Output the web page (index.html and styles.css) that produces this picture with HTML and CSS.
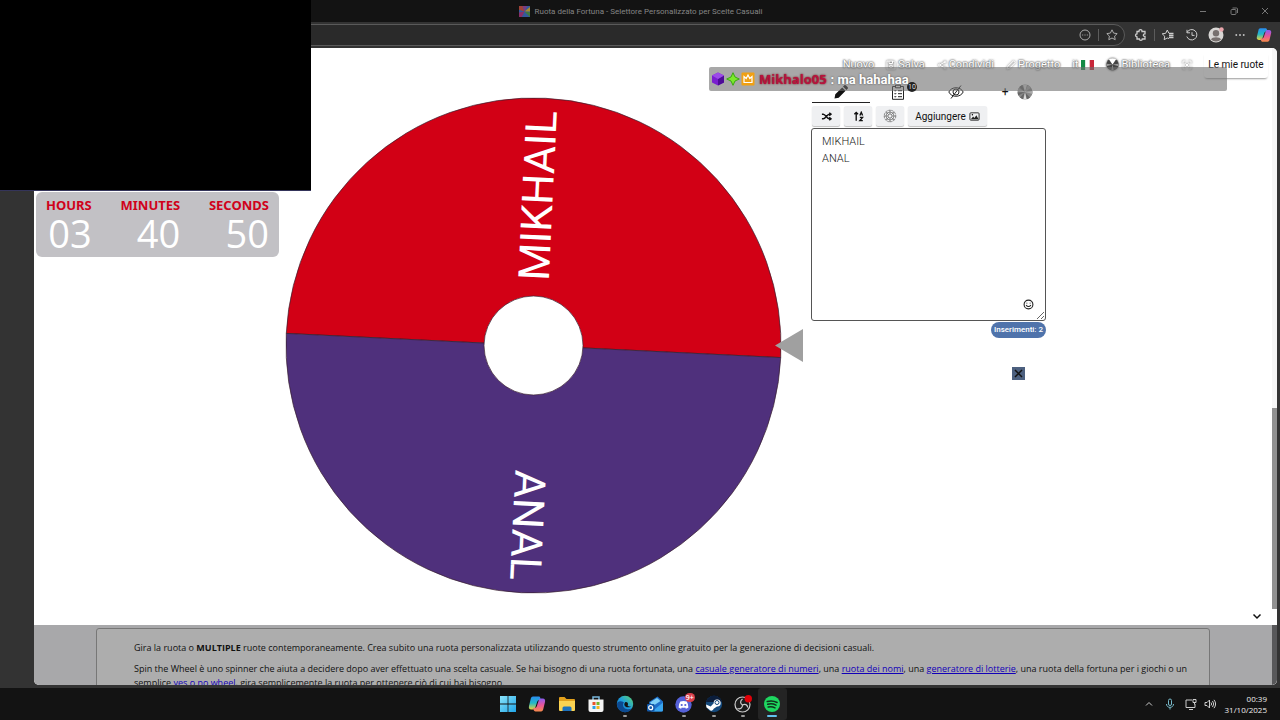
FILE: index.html
```html
<!DOCTYPE html>
<html lang="it">
<head>
    <meta charset="UTF-8">
    <meta name="viewport" content="width=device-width, initial-scale=1.0">
    <title>Ruota della Fortuna - Selettore Personalizzato per Scelte Casuali</title>
    <link rel="stylesheet" href="styles.css">
</head>
<body>
    <svg class="defs" aria-hidden="true">
        <defs>
            <linearGradient id="copilotA" x1="0" y1="0" x2="0" y2="1">
                <stop offset="0" stop-color="#2a8cf0"/><stop offset="0.5" stop-color="#22b8c8"/><stop offset="1" stop-color="#e8d23c"/>
            </linearGradient>
            <linearGradient id="copilotB" x1="0" y1="0" x2="0" y2="1">
                <stop offset="0" stop-color="#8a5cf0"/><stop offset="0.5" stop-color="#e8559a"/><stop offset="1" stop-color="#f78b4a"/>
            </linearGradient>
            <linearGradient id="edgeA" x1="0" y1="1" x2="1" y2="0">
                <stop offset="0" stop-color="#0b59a8"/><stop offset="0.5" stop-color="#1d9de0"/><stop offset="1" stop-color="#5fd86a"/>
            </linearGradient>
            <linearGradient id="winA" x1="0" y1="0" x2="1" y2="1">
                <stop offset="0" stop-color="#8be4fb"/><stop offset="1" stop-color="#1fa5e8"/>
            </linearGradient>
            <symbol id="copilot" viewBox="0 0 18 18">
                <path stroke="none" fill="url(#copilotA)" d="M5 1.500h5.500c1 0 1.500.5 1.800 1.400L13 5h-1.500c-1.300 0-2 .7-2.400 2L7.300 12.500c-.4 1.300-1 2-2.300 2H3.200C1.200 14.500.5 13 1 11l1.700-7C3 2.500 3.600 1.500 5 1.500z"/>
                <path stroke="none" fill="url(#copilotB)" d="M13 16.500H7.500c-1 0-1.500-.5-1.800-1.400L5 13h1.500c1.300 0 2-.7 2.400-2l1.800-5.500c.4-1.300 1-2 2.300-2h1.800c2 0 2.700 1.500 2.200 3.500l-1.700 7c-.3 1.500-.9 2.500-2.300 2.500z"/>
            </symbol>
            <symbol id="pinwheel" viewBox="0 0 16 16">
                <circle cx="8" cy="8" r="7.500" fill="#888"/>
                <path fill="#666" d="M8 8L2.500 3A7.500 7.500 0 0 1 5 1.200zM8 8L.5 8.500 1.200 11.500zM8 8L3 13.600 5.700 15.200zM8 8l2 7.300 3-1.500z"/>
                <path fill="#ddd" d="M8 8L6 .7h4zM8 8l-1.500 7.400h3z"/>
                <path fill="#aaa" d="M8 8l7.500-1v3zM8 8l3-6.900 3 2.700zM8 8L.5 7l1.200-3z"/>
            </symbol>
            <symbol id="pinwheel-dark" viewBox="0 0 16 16">
                <circle cx="8" cy="8" r="7.500" fill="#444"/>
                <path fill="#fff" d="M8 8L3.500 1.500Q8-.8 12.500 1.500z"/>
                <path fill="#999" d="M8 8l7.500-1v3zM8 8l-1.500 7.400h3zM8 8L.5 7v3z"/>
            </symbol>
        </defs>
    </svg>

    <header class="titlebar">
        <div class="page-title">
            <svg class="favicon" viewBox="0 0 12 12"><path fill="#345a9c" d="M0 0h12v12H0z"/><path fill="#a04236" d="M6 6L0 4V0h4z"/><path fill="#7a3c80" d="M6 6L4 0h5z"/><path fill="#a88a30" d="M6 6l6-5v5z"/><path fill="#417a3c" d="M6 6l6 1v5z"/><path fill="#8a2f68" d="M6 6L0 7v5h3z"/></svg>
            <span>Ruota della Fortuna - Selettore Personalizzato per Scelte Casuali</span>
        </div>
        <div class="window-controls">
            <button aria-label="Riduci"><svg viewBox="0 0 12 12"><path d="M3 6.500h6"/></svg></button>
            <button aria-label="Ripristina"><svg viewBox="0 0 12 12"><rect x="3" y="4.500" width="5" height="5" rx="1"/><path d="M4.500 3h4q1 0 1 1v4"/></svg></button>
            <button aria-label="Chiudi"><svg viewBox="0 0 12 12"><path d="M3 3l6 6M9 3L3 9"/></svg></button>
        </div>
    </header>

    <div class="toolbar">
        <div class="address">
            <button aria-label="Altre opzioni"><svg viewBox="0 0 16 16"><circle cx="8" cy="8" r="5"/><path d="M5.200 8h1M7.500 8h1M9.800 8h1"/></svg></button>
            <span class="sep"></span>
            <button aria-label="Preferiti"><svg viewBox="0 0 16 16"><path d="M8 2.800l1.600 3.300 3.600.5-2.600 2.500.6 3.600L8 11l-3.200 1.700.6-3.600-2.600-2.500 3.600-.5z"/></svg></button>
        </div>
        <div class="tools">
            <button aria-label="Estensioni"><svg viewBox="0 0 16 16"><path stroke-width="1.300" d="M4 4.500h2c-.3-2.600 3.300-2.600 3 0h3v2.300c-2.200-.1-2.200 2.800 0 2.700V12H9.300c0 1.800-2.900 1.800-2.900 0H4V9.800c-2-.1-2-2.900 0-2.900z"/></svg></button>
            <span class="sep"></span>
            <button aria-label="Raccolte"><svg viewBox="0 0 16 16"><path d="M9 11.500l-1.800-.5-3 1.700.5-3.500L2.200 6.800l3.500-.5L7.300 3l1.500 3.200"/><path stroke-width="1.500" d="M9 6.500h4.500M9 8.500h4.500M9 10.500h4.500"/></svg></button>
            <button aria-label="Cronologia"><svg viewBox="0 0 16 16"><path d="M3 5.500a5.200 5.200 0 1 1-.2 4M3 2.800v3h3M8 5.200v3.200h2.500"/></svg></button>
            <button aria-label="Profilo"><svg class="avatar" viewBox="0 0 16 16"><circle cx="8" cy="8" r="7.500" fill="#d8d6d4"/><circle cx="8" cy="6.200" r="3.200" fill="#77706e"/><path fill="#77706e" d="M3 12.500c1-3 9-3 10 0-2.500 2.500-7.500 2.500-10 0z"/><circle cx="13.500" cy="2.500" r="2.200" fill="#eaa6ac"/></svg></button>
            <button aria-label="Menu"><svg viewBox="0 0 16 16"><path stroke-width="1.600" stroke="#ddd" d="M3.500 8h1.600M7.200 8h1.600M10.900 8h1.600"/></svg></button>
            <button aria-label="Copilot"><svg><use href="#copilot"/></svg></button>
        </div>
    </div>

    <div class="browser">
        <div class="page">
            <div class="content">
                <main class="main">
                    <section class="wheel-col">
                        <svg class="wheel" viewBox="-1 0 519 497" role="img" aria-label="Ruota">
                            <g transform="rotate(2.800 247.500 248.500)">
                                <path class="slice-top" d="M0 248.500a247.500 247.500 0 0 1 495 0z"/>
                                <path class="slice-bottom" d="M495 248.500a247.500 247.500 0 0 1-495 0z"/>
                            </g>
                            <circle class="hub" cx="247.500" cy="248.500" r="49.500"/>
                            <g class="wheel-text">
                                <text transform="translate(247.500 248.500) rotate(-87.200)" x="235" y="12">MIKHAIL</text>
                                <text transform="translate(247.500 248.500) rotate(92.800)" x="235" y="12">ANAL</text>
                            </g>
                            <path class="pointer" d="M489 248.500l28-16.500v33z"/>
                        </svg>
                    </section>

                    <section class="side">
                        <nav class="menu">
                            <a href="#">Nuovo</a>
                            <a href="#"><svg viewBox="0 0 10 10"><path d="M1 1h6.500L9 2.500V9H1zM3 1v2.500h3.500V1"/><circle cx="5" cy="6.300" r="1.300"/></svg>Salva</a>
                            <a href="#"><svg viewBox="0 0 10 10"><path d="M8 2L2.500 5 8 8"/><circle cx="8" cy="2" r="1"/><circle cx="2.500" cy="5" r="1"/><circle cx="8" cy="8" r="1"/></svg>Condividi</a>
                            <a href="#"><svg viewBox="0 0 10 10"><path d="M1 9l.7-2.500L7.500.8l1.700 1.700-5.700 5.800z"/></svg>Progetto</a>
                            <a href="#">it<svg class="flag" viewBox="0 0 13 10"><path fill="#138a45" d="M0 0h4.400v10H0z"/><path fill="#fff" d="M4.400 0h4.300v10H4.400z"/><path fill="#c9273a" d="M8.700 0H13v10H8.700z"/></svg></a>
                            <a href="#"><svg class="pin"><use href="#pinwheel-dark"/></svg>Biblioteca</a>
                            <a href="#" aria-label="Schermo intero"><svg viewBox="0 0 10 10"><path d="M1 3.500V1h2.500M6.500 1H9v2.500M9 6.500V9H6.500M3.500 9H1V6.500M3.500 3.500l3 3M6.500 3.500l-3 3"/></svg></a>
                            <button class="my-wheels">Le mie ruote</button>
                        </nav>

                        <div class="panel">
                            <div class="tabs">
                                <button class="tab active" aria-label="Modifica"><svg viewBox="0 0 16 16"><path fill="#111" d="M1.500 14.500l.8-4.200 6.900-6.900 3.400 3.400-6.900 6.900zM10 2.600l1.200-1.200c.6-.6 1.300-.5 1.900.1l1.400 1.400c.6.6.6 1.300.1 1.900L13.400 6z"/></svg></button>
                                <button class="tab" aria-label="Risultati"><svg viewBox="0 0 16 16"><path class="line" d="M5.500 2.500H2.500v12.800h11V2.500h-3M5.500 1.200h5v2.600h-5zM4.500 6.500l.7.700 1-1.200M4.500 9.500l.7.700 1-1.200M4.500 12.500l.7.700 1-1.200M8 6.700h4M8 9.700h4M8 12.700h4"/></svg><span class="count">10</span></button>
                                <button class="tab" aria-label="Nascondi"><svg viewBox="0 0 16 16"><path class="line" d="M.8 8C3.500 2.300 12.500 2.300 15.200 8 12.500 13.700 3.500 13.700.8 8zM13 1.500l-10 13"/><circle class="line" cx="8" cy="8" r="3"/></svg></button>
                                <button class="tab add" aria-label="Aggiungi ruota"><span>+</span><svg><use href="#pinwheel"/></svg></button>
                            </div>

                            <div class="actions">
                                <button aria-label="Mescola"><svg viewBox="0 0 12 12"><path class="bold" d="M1 3.500h1.500c2.500 0 4 5 6.500 5h1.500M1 8.500h1.500c2.500 0 4-5 6.500-5h1.500M9 1.800l2 1.700-2 1.700M9 6.800l2 1.700-2 1.700"/></svg></button>
                                <button aria-label="Ordina"><svg viewBox="0 0 12 12"><path class="bold" d="M3.500 10.500v-9M1.500 3.500l2-2 2 2M7.500 5l1.500-3.500L10.500 5M7.500 7h3l-3 3.500h3.200"/></svg></button>
                                <button aria-label="Colori"><svg class="flower" viewBox="0 0 14 14"><circle cx="7" cy="7" r="2"/><circle cx="7" cy="7" r="4"/><circle cx="7" cy="7" r="5.800" stroke-dasharray="2.500 .6"/><path d="M7 1v4M7 9v4M1 7h4M9 7h4M2.800 2.800l2.800 2.800M8.400 8.400l2.800 2.800M11.200 2.800L8.400 5.600M5.600 8.400l-2.800 2.800"/></svg></button>
                                <button class="wide">Aggiungere <svg viewBox="0 0 12 12"><rect class="line" x="1" y="2" width="10" height="8" rx="1"/><path fill="#222" d="M2 9l2.500-3 1.500 1.500L8 4.500 10.500 9z"/><circle cx="3.700" cy="4.200" r=".8"/></svg></button>
                            </div>

                            <div class="entries">
                                <textarea aria-label="Elenco voci" spellcheck="false">MIKHAIL
ANAL</textarea>
                                <button class="emoji" aria-label="Emoji"><svg viewBox="0 0 10 10"><circle class="line" cx="5" cy="5" r="4"/><path class="line" d="M2.800 5.500q2.200 2.600 4.400 0M3.500 3.300v.8M6.500 3.300v.8"/></svg></button>
                            </div>
                            <div class="total"><span>Inserimenti: 2</span></div>
                            <div class="ad"><button aria-label="Chiudi annuncio"><svg viewBox="0 0 13 13"><path d="M3 3l7 7M10 3l-7 7"/></svg></button></div>
                        </div>
                        <button class="down" aria-label="Scorri"><svg viewBox="0 0 10 10"><path d="M1.500 3.500L5 7l3.500-3.500"/></svg></button>
                    </section>
                </main>

                <section class="info">
                    <div class="info-box">
                        <p>Gira la ruota o <b>MULTIPLE</b> ruote contemporaneamente. Crea subito una ruota personalizzata utilizzando questo strumento online gratuito per la generazione di decisioni casuali.</p>
                        <p>Spin the Wheel è uno spinner che aiuta a decidere dopo aver effettuato una scelta casuale. Se hai bisogno di una ruota fortunata, una <a href="#">casuale generatore di numeri</a>, una <a href="#">ruota dei nomi</a>, una <a href="#">generatore di lotterie</a>, una ruota della fortuna per i giochi o un semplice <a href="#">yes o no wheel</a>, gira semplicemente la ruota per ottenere ciò di cui hai bisogno.</p>
                    </div>
                </section>
            </div>
            <div class="scrollbar"><div class="thumb"></div><div class="corner"></div><div class="rest"></div></div>
        </div>
    </div>

    <footer class="taskbar">
        <div class="apps">
            <button aria-label="Start"><svg viewBox="0 0 18 18"><path fill="url(#winA)" d="M1 1h7.600v7.600H1zM9.400 1H17v7.600H9.400zM1 9.400h7.600V17H1zM9.400 9.400H17V17H9.400z"/></svg></button>
            <button aria-label="Copilot"><svg><use href="#copilot"/></svg></button>
            <button aria-label="Esplora file"><svg viewBox="0 0 18 18"><path fill="#e3a11c" d="M1 3q0-1 1-1h4.500l2 2H16q1 0 1 1v4H1z"/><path fill="#fbd352" d="M1 6h16v9q0 1-1 1H2q-1 0-1-1z"/><path fill="#1d72bd" d="M4.500 16v-3q0-1.500 1.500-1.500h6q1.500 0 1.500 1.500v3z"/></svg></button>
            <button aria-label="Store"><svg viewBox="0 0 18 18"><path fill="none" stroke="#78b7dc" stroke-width="1.500" d="M6 5V2h6v3"/><path fill="#f4f4f4" d="M1.500 4.500h15V15q0 2-2 2h-11q-2 0-2-2z"/><path fill="#e9532c" d="M5.500 7h3v3h-3z"/><path fill="#74b52c" d="M9.500 7h3v3h-3z"/><path fill="#2b9fe6" d="M5.500 11h3v3h-3z"/><path fill="#f1b71e" d="M9.500 11h3v3h-3z"/></svg></button>
            <button class="running" aria-label="Edge"><svg viewBox="0 0 18 18"><circle cx="9" cy="9" r="8.200" fill="url(#edgeA)"/><path fill="#0c4a91" d="M1 9c0 5 4 8.200 8 8.200 3 0 5.500-1.500 6.700-3.700-3.500 1.800-8.700.5-8.700-3.500 0-1 .4-2 1-2.500C5 5.500 1.500 6 1 9z"/><path fill="#131313" d="M9 7.500c-1.500 1.500-.5 4.800 3 4.800 2 0 3.500-.3 4.700-1.300-1 1-3.700.8-4.700 0-.7-.6 0-1 0-2 0-1.500-1.800-2.500-3-1.500z"/></svg></button>
            <button aria-label="Outlook"><svg viewBox="0 0 18 18"><path fill="#1d6fc9" d="M3 7l8.500-5.500L17 6.500V15q0 1.500-1.500 1.500H5z"/><path fill="#7fd0f7" d="M4 7.500L11 3l3.500 3L7 11z"/><path fill="#38a5ee" d="M17 7.500L6 16.500h9.500Q17 16.500 17 15z"/><rect x="1" y="9" width="7.500" height="7.500" rx="1" fill="#1258a8"/><circle cx="4.700" cy="12.700" r="2" fill="none" stroke="#fff" stroke-width="1.200"/></svg></button>
            <button class="running" aria-label="Discord"><svg viewBox="0 0 18 18"><circle cx="8.500" cy="9.500" r="8.200" fill="#5561d8"/><path fill="#fff" d="M5.300 6.500q3.200-1.200 6.400 0 1.800 2.700 1.700 6-1.200 1-2.500 1.200l-.7-1.200q-1.700.5-3.400 0l-.7 1.200q-1.300-.2-2.500-1.200-.1-3.300 1.700-6z"/><circle cx="6.700" cy="10" r="1.100" fill="#5561d8"/><circle cx="10.300" cy="10" r="1.100" fill="#5561d8"/></svg><span class="alert">9+</span></button>
            <button class="running" aria-label="Steam"><svg viewBox="0 0 18 18"><circle cx="9" cy="9" r="8.200" fill="#14497c"/><path fill="#0b1d3b" d="M1 7a8.200 8.200 0 0 1 16 0z"/><path fill="#fff" d="M1 9.500l4.700 2 3-3.200a3.500 3.500 0 1 1 3.300 3.200l-3.300 2.300a2.500 2.500 0 0 1-4.700.4L1.500 12.500z"/><circle cx="12" cy="7.500" r="2" fill="#fff" stroke="#14497c" stroke-width="1"/></svg></button>
            <button class="running" aria-label="OBS"><svg viewBox="0 0 18 18"><circle cx="8.500" cy="9.500" r="7.500" fill="#1c1c1c" stroke="#ccc" stroke-width="1.200"/><path fill="none" stroke="#ccc" stroke-width="1.200" d="M8.500 10c-2.500-1.500-2.500-4 0-6M8.500 10c2.500-1.500 5-.3 5.200 2.500M8.500 10c0 3-2.300 4.500-5 3.500"/><circle cx="14.300" cy="3.700" r="3.700" fill="#e00008"/></svg></button>
            <button class="running current" aria-label="Spotify"><svg viewBox="0 0 18 18"><circle cx="9" cy="9" r="8" fill="#1ed760"/><path fill="none" stroke="#10301b" stroke-width="1.500" stroke-linecap="round" d="M4.200 6.500q5.300-1.500 9.900 1M4.700 9.300q4.500-1.200 8.300.9M5.200 12q3.700-1 6.800.8"/></svg></button>
        </div>
        <div class="tray">
            <svg viewBox="0 0 12 12"><path d="M3 7.500l3-3 3 3"/></svg>
            <svg class="mic" viewBox="0 0 12 12"><rect x="4.500" y="1" width="3" height="6.500" rx="1.500"/><path d="M2.500 6c0 4.500 7 4.500 7 0M6 9.500v2"/></svg>
            <svg viewBox="0 0 12 12"><path d="M7 2H1v7.500h9V6M4 11.500h4M8 1.500h3v3H8zM9.500 4.500v2"/></svg>
            <svg viewBox="0 0 12 12"><path d="M1 4.500h2L5.500 2v8L3 7.500H1zM7 4.500q1.300 1.500 0 3M8.500 3q2.500 3 0 6M10 1.800q3.200 4.200 0 8.400"/></svg>
            <div class="clock"><span>00:39</span><span>31/10/2025</span></div>
        </div>
    </footer>

    <!-- stream overlays -->
    <div class="cam"></div>

    <div class="timer">
        <div class="unit"><span class="unit-name">HOURS</span><span class="unit-value">03</span></div>
        <div class="unit"><span class="unit-name">MINUTES</span><span class="unit-value">40</span></div>
        <div class="unit"><span class="unit-name">SECONDS</span><span class="unit-value">50</span></div>
    </div>

    <div class="chat">
        <svg viewBox="0 0 14 14"><path fill="#7a1fd0" d="M7 .5l6 3v7l-6 3-6-3v-7z"/><path fill="#4d0d97" d="M7 7l6-3.500v7l-6 3z"/><path fill="#9c4be8" d="M1 3.500l6-3 6 3L7 7z"/></svg>
        <svg viewBox="0 0 14 14"><path fill="#7be82c" stroke="#3aa80f" d="M7 .7l2 4.300 4.300 2L9 9l-2 4.300L5 9 .7 7 5 5z"/></svg>
        <svg viewBox="0 0 14 14"><rect x=".5" y=".5" width="13" height="13" rx="1" fill="#f0a013"/><path fill="none" stroke="#fff" stroke-width="1.200" d="M3 10.500V4.500l2.200 2L7 3l1.800 3.500 2.200-2v6z"/></svg>
        <span class="chat-user">Mikhalo05</span>
        <span class="chat-text">: ma hahahaa</span>
    </div>
</body>
</html>
```

FILE: styles.css
```css
* {
    box-sizing: border-box;
}

body {
    margin: 0;
    height: 100vh;
    display: flex;
    flex-direction: column;
    position: relative;
    overflow: hidden;
    background-color: #333;
    font-family: Roboto, sans-serif;
    font-size: 10px;
    color: #111;
}

button {
    font-family: inherit;
    font-size: inherit;
    color: inherit;
    background: none;
    border: none;
    padding: 0;
    display: flex;
    align-items: center;
    justify-content: center;
}

svg {
    display: block;
    flex: none;
}

.defs {
    position: absolute;
    width: 0;
    height: 0;
}

/* browser window */
.titlebar {
    flex: 0 0 22px;
    display: flex;
    align-items: center;
    justify-content: flex-end;
    background-color: #131313;
    color: #858585;
    font-size: 8px;
}

.page-title {
    flex: 1;
    display: flex;
    align-items: center;
    justify-content: center;
    gap: 5px;
    padding-left: 94px;
}

.favicon {
    width: 11px;
    height: 11px;
}

.window-controls {
    display: flex;
}

.window-controls button {
    width: 31px;
    height: 22px;
}

.window-controls svg {
    width: 12px;
    height: 12px;
    fill: none;
    stroke: #777;
}

.toolbar {
    flex: 0 0 26px;
    display: flex;
    align-items: center;
    background-color: #333;
}

.toolbar svg {
    width: 16px;
    height: 16px;
    fill: none;
    stroke: #ccc;
}

.toolbar .avatar {
    stroke: none;
}

.address {
    flex: 1;
    height: 22px;
    display: flex;
    align-items: center;
    justify-content: flex-end;
    gap: 5px;
    padding-right: 4px;
    background-color: #2a2a2a;
    border: 1px solid #5a5a5a;
    border-radius: 11px;
}

.address svg {
    stroke: #aaa;
}

.sep {
    width: 1px;
    height: 12px;
    background-color: #5c5c5c;
}

.tools {
    display: flex;
    align-items: center;
    gap: 8px;
    padding: 0 8px;
}

.tools .sep {
    margin: 0 -3px;
}

.browser {
    flex: 1;
    min-height: 0;
    display: flex;
    padding: 0 3px 3px 34px;
}

.page {
    flex: 1;
    display: flex;
    overflow: hidden;
    background-color: #fff;
    border-radius: 0 5px 5px 5px;
}

.content {
    flex: 1;
    min-width: 0;
    display: flex;
    flex-direction: column;
}

.scrollbar {
    flex: 0 0 5px;
    display: flex;
    flex-direction: column;
    padding-top: 360px;
    background-color: #f6f6f6;
}

.thumb {
    flex: 1;
    background-color: #919191;
}

.corner {
    flex: 0 0 16px;
    background-color: #fff;
}

.rest {
    flex: 0 0 60px;
    background-color: #58585a;
}

/* wheel */
.main {
    flex: 1;
    min-height: 0;
    display: flex;
}

.wheel-col {
    flex: 0 0 777px;
    display: flex;
    justify-content: flex-end;
    align-items: flex-start;
    padding: 49px 7px 0 0;
}

.wheel {
    width: 519px;
}

.slice-top,
.slice-bottom {
    fill: #d20015;
    stroke: #3a2030;
    stroke-width: 0.7;
}

.slice-bottom {
    fill: #4f307c;
}

.hub {
    fill: #fff;
    stroke: #3a2030;
    stroke-width: 0.7;
}

.wheel-text {
    fill: #fff;
    font-size: 43px;
    text-anchor: end;
}

.pointer {
    fill: #a0a0a0;
}

.side {
    flex: 1;
    display: flex;
    flex-direction: column;
    align-items: flex-start;
}

.menu {
    align-self: stretch;
    display: flex;
    align-items: center;
    justify-content: flex-end;
    gap: 12px;
    height: 33px;
    padding-right: 4px;
}

.menu a {
    display: flex;
    align-items: center;
    gap: 2px;
    color: #fff;
    font-size: 11px;
    text-decoration: none;
    text-shadow: 0 0 2px #444, 0 0 2px #555;
}

.menu svg {
    width: 10px;
    height: 10px;
    fill: none;
    stroke: #fff;
    filter: drop-shadow(0 0 1px #444);
}

.menu .flag {
    width: 13px;
    filter: none;
    stroke: none;
    margin-left: 1px;
}

.menu .pin {
    width: 13px;
    height: 13px;
    stroke: none;
}

.my-wheels {
    height: 26px;
    width: 64px;
    background-color: #fff;
    border-radius: 3px;
    box-shadow: 0 2px 2px -1px rgba(0, 0, 0, 0.4);
    white-space: nowrap;
}

.panel {
    width: 235px;
}

.tabs {
    display: flex;
    height: 22px;
    padding-left: 1px;
}

.tab {
    flex: 1;
    position: relative;
    border-bottom: 1px solid transparent;
}

.tab.active {
    border-bottom-color: #222;
}

.tab svg {
    width: 16px;
    height: 16px;
}

.tab.add {
    gap: 8px;
    font-size: 12px;
    padding-left: 4px;
}

.line {
    fill: none;
    stroke: #222;
}

.bold {
    fill: none;
    stroke: #111;
    stroke-width: 1.5;
}

.count {
    position: absolute;
    top: 1px;
    right: 10px;
    z-index: 2;
    width: 10px;
    height: 10px;
    border-radius: 5px;
    background-color: #222;
    color: #ddd;
    font-size: 7px;
    line-height: 10px;
}

.actions {
    display: flex;
    gap: 4px;
    padding: 3px 1px 2px;
}

.actions button {
    width: 28px;
    height: 20px;
    background-color: #eff0f2;
    border-radius: 2px;
    box-shadow: 0 1px 1px rgba(0, 0, 0, 0.25);
}

.actions button.wide {
    width: 79px;
    gap: 3px;
}

.actions svg {
    width: 11px;
    height: 11px;
}

.actions .flower {
    width: 14px;
    height: 14px;
    fill: none;
    stroke: #666;
    stroke-width: 0.7;
}

.entries {
    position: relative;
}

.entries textarea {
    display: block;
    width: 100%;
    height: 193px;
    padding: 4px 10px;
    border: 1px solid #555;
    border-radius: 3px;
    background-color: #fff;
    color: #222;
    font-family: Roboto, sans-serif;
    font-weight: 300;
    font-size: 11px;
    line-height: 17px;
    resize: vertical;
    outline: none;
}

.emoji {
    position: absolute;
    right: 12px;
    bottom: 11px;
}

.emoji svg {
    width: 11px;
    height: 11px;
}

.total {
    display: flex;
    justify-content: flex-end;
    padding-top: 1px;
}

.total span {
    padding: 0 3px;
    border-radius: 8px;
    background-color: #4f73ab;
    color: #fff;
    font-size: 8px;
    font-weight: 500;
    line-height: 16px;
}

.ad {
    display: flex;
    justify-content: flex-end;
    padding: 29px 21px 0 0;
}

.ad button {
    background-color: #4c607f;
}

.ad svg {
    width: 13px;
    height: 13px;
    stroke: #111;
    stroke-width: 1.5;
}

.down {
    margin: auto 10px 4px auto;
}

.down svg {
    width: 10px;
    height: 10px;
    fill: none;
    stroke: #111;
    stroke-width: 1.5;
}

.info {
    flex: 0 0 60px;
    overflow: hidden;
    padding: 3px 62px 0;
    background-color: #a8a8aa;
}

.info-box {
    height: 90px;
    padding: 12px 18px 12px 37px;
    border: 1px solid #777;
    border-radius: 3px;
    background-color: #adadad;
    font-family: "Open Sans", sans-serif;
    font-size: 9px;
}

.info-box p {
    margin: 0 0 7px;
    line-height: 14px;
}

.info-box a {
    color: #1200b8;
}

/* taskbar */
.taskbar {
    flex: 0 0 32px;
    display: flex;
    justify-content: center;
    position: relative;
    background-color: #131313;
    font-family: "Open Sans", sans-serif;
}

.apps {
    display: flex;
    width: 294px;
}

.apps button {
    flex: 1;
    position: relative;
}

.apps svg {
    width: 18px;
    height: 18px;
}

.apps .running::after {
    content: "";
    position: absolute;
    bottom: 3px;
    left: 50%;
    width: 4px;
    height: 2px;
    margin-left: -2px;
    border-radius: 1px;
    background-color: #999;
}

.apps .current {
    background-color: #242424;
    border-radius: 3px;
}

.apps .current::after {
    width: 10px;
    margin-left: -5px;
    background-color: #62c2ee;
}

.alert {
    position: absolute;
    top: 5px;
    right: 4px;
    width: 10px;
    border-radius: 5px;
    background-color: #d8404c;
    color: #fff;
    font-size: 7px;
    font-weight: 600;
    line-height: 9px;
}

.tray {
    position: absolute;
    top: 0;
    right: 13px;
    height: 100%;
    display: flex;
    align-items: center;
    gap: 7px;
    color: #eee;
}

.tray svg {
    width: 12px;
    height: 12px;
    fill: none;
    stroke: #ccc;
}

.tray .mic {
    stroke: #79bccc;
    margin: 0 2px;
}

.clock {
    display: flex;
    flex-direction: column;
    align-items: flex-end;
    margin-left: 2px;
    font-size: 8px;
    line-height: 11px;
}

/* overlays */
.cam {
    position: absolute;
    top: 0;
    left: 0;
    width: 311px;
    height: 191px;
    background-color: #000;
    border-bottom: 1px solid #34345a;
}

.timer {
    position: absolute;
    top: 192px;
    left: 36px;
    width: 243px;
    height: 65px;
    display: flex;
    justify-content: space-between;
    padding: 4px 10px;
    border-radius: 6px;
    background-color: #c2c1c5;
}

.unit {
    display: flex;
    flex-direction: column;
    align-items: flex-end;
}

.unit-name {
    color: #d0021b;
    font-family: "Noto Sans", sans-serif;
    font-size: 13px;
    font-weight: 700;
    line-height: 18px;
}

.unit-value {
    color: #fff;
    font-family: "Open Sans", sans-serif;
    font-size: 38px;
    font-weight: 400;
    line-height: 38px;
}

.chat {
    position: absolute;
    top: 67px;
    left: 709px;
    width: 518px;
    height: 24px;
    display: flex;
    align-items: center;
    gap: 1px;
    padding-left: 2px;
    border-radius: 2px;
    background-color: rgba(110, 110, 110, 0.6);
    font-family: "Open Sans", sans-serif;
    font-size: 13px;
    font-weight: 700;
}

.chat svg {
    width: 14px;
    height: 14px;
}

.chat-user {
    margin: 0 3px;
    color: #b8123e;
    text-shadow: 0 0 2px #600;
}

.chat-text {
    color: #fff;
    font-family: Roboto, sans-serif;
    text-shadow: 0 0 2px #444;
}
```
